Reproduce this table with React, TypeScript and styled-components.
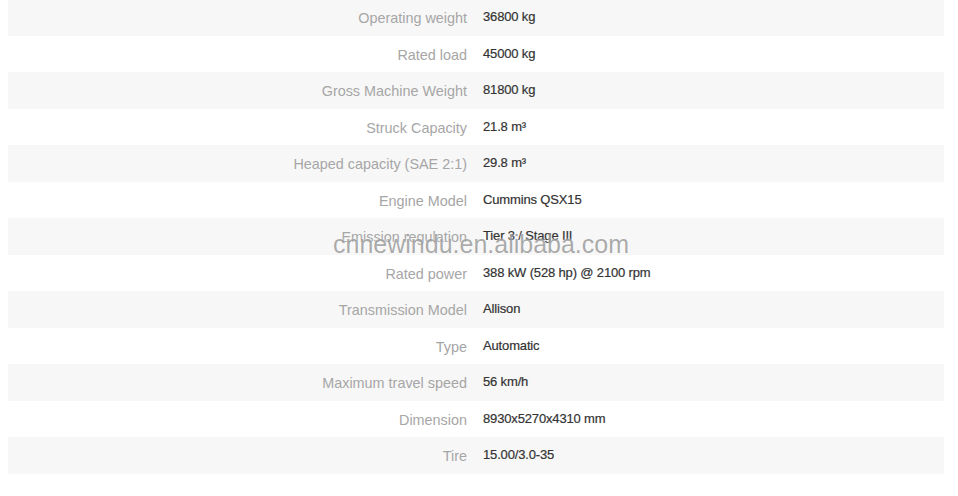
import styled, { createGlobalStyle } from 'styled-components'

const GlobalStyle = createGlobalStyle`
  body {
    margin: 0 8px;
    background: #fff;
    font-family: "Liberation Sans", Arial, sans-serif;
  }
`

const Wrapper = styled.div`
  position: relative;
  width: 936px;
  margin-top: -0.6px;
`

const SpecTable = styled.div`
  display: grid;
  grid-template-columns: 1fr 1fr;
  grid-auto-rows: 36.5px;
`

const Row = styled.div<{ $striped: boolean }>`
  display: contents;

  & > div {
    background: ${(props) => (props.$striped ? '#f7f7f7' : '#fff')};
  }
`

const Label = styled.div`
  display: flex;
  align-items: center;
  justify-content: flex-end;
  padding: 1px 9px 0 0;
  font-size: 14.4px;
  color: #a6a6a6;
  white-space: nowrap;
`

const Value = styled.div`
  display: flex;
  align-items: center;
  padding: 0 0 2px 7px;
  font-size: 13px;
  letter-spacing: -0.15px;
  color: #333;
  white-space: nowrap;
  -webkit-text-stroke: 0.2px #333;
`

const Watermark = styled.div`
  position: absolute;
  left: 325px;
  top: 231px;
  font-size: 25px;
  color: rgba(115, 115, 115, 0.6);
  text-shadow: 0 0 2px rgba(255, 255, 255, 0.9);
  pointer-events: none;
  white-space: nowrap;
`

const specs: [string, string][] = [
  ['Operating weight', '36800 kg'],
  ['Rated load', '45000 kg'],
  ['Gross Machine Weight', '81800 kg'],
  ['Struck Capacity', '21.8 m³'],
  ['Heaped capacity (SAE 2:1)', '29.8 m³'],
  ['Engine Model', 'Cummins QSX15'],
  ['Emission regulation', 'Tier 3 / Stage III'],
  ['Rated power', '388 kW (528 hp) @ 2100 rpm'],
  ['Transmission Model', 'Allison'],
  ['Type', 'Automatic'],
  ['Maximum travel speed', '56 km/h'],
  ['Dimension', '8930x5270x4310 mm'],
  ['Tire', '15.00/3.0-35'],
]

export default function App() {
  return (
    <>
      <GlobalStyle />
      <Wrapper>
        <SpecTable>
          {specs.map(([label, value], i) => (
            <Row key={label} $striped={i % 2 === 0}>
              <Label>{label}</Label>
              <Value>{value}</Value>
            </Row>
          ))}
        </SpecTable>
        <Watermark>cnnewindu.en.alibaba.com</Watermark>
      </Wrapper>
    </>
  )
}
